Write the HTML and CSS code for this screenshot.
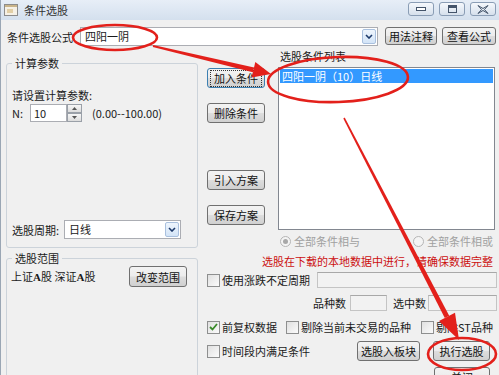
FILE: index.html
```html
<!DOCTYPE html>
<html>
<head>
<meta charset="utf-8">
<link rel="stylesheet" href="styles.css">
</head>
<body>
<div class="win">
  <div class="titlebar">
    <svg class="appicon" width="14" height="12" viewBox="0 0 14 12">
      <rect x="0.5" y="0.5" width="13" height="11" fill="#f6f1e6" stroke="#8c8c8c"/>
      <rect x="1" y="1" width="12" height="2" fill="#c9b48a"/>
      <rect x="3" y="5" width="6" height="4" fill="#e2cfa6"/>
    </svg>
    <span class="title">条件选股</span>
    <div class="controls">
      <div class="ctl"><svg width="10" height="5" viewBox="0 0 10 5"><rect x="0.5" y="0.5" width="9" height="3" fill="#fff" stroke="#44546a"/></svg></div>
      <div class="ctl"><svg width="9" height="8" viewBox="0 0 9 8"><rect x="0.5" y="0.5" width="8" height="7" fill="none" stroke="#44546a"/><rect x="1" y="1" width="7" height="2" fill="#44546a"/></svg></div>
      <div class="ctl"><svg width="12" height="9" viewBox="0 0 12 9"><path d="M1 0.5 L6 3.5 L11 0.5 M1 8.5 L6 5.5 L11 8.5 M1 0.5 L4.5 4.5 L1 8.5 M11 0.5 L7.5 4.5 L11 8.5" fill="none" stroke="#44546a" stroke-width="1"/></svg></div>
    </div>
  </div>

  <div class="client">
    <div class="formula-row">
      <span class="lbl">条件选股公式</span>
      <div class="combo formula-combo">
        <span class="combo-text">四阳一阴</span>
        <span class="drop"><svg width="8" height="5" viewBox="0 0 8 5"><path d="M1 1 L4 4 L7 1" fill="none" stroke="#1d3a6b" stroke-width="1.6"/></svg></span>
      </div>
      <button class="btn btn-top1">用法注释</button>
      <button class="btn btn-top2">查看公式</button>
    </div>

    <div class="main">
      <div class="leftcol">
        <fieldset class="group g1">
          <legend>计算参数</legend>
          <div class="g1-body">
            <div class="prompt">请设置计算参数:</div>
            <div class="nrow">
              <span>N:</span>
              <div class="spin"><span>10</span></div>
              <div class="spin-btns">
                <span class="sb"><svg width="5" height="3" viewBox="0 0 5 3"><path d="M0 3 L2.5 0 L5 3Z" fill="#555"/></svg></span>
                <span class="sb"><svg width="5" height="3" viewBox="0 0 5 3"><path d="M0 0 L2.5 3 L5 0Z" fill="#555"/></svg></span>
              </div>
              <span class="range">(0.00--100.00)</span>
            </div>
            <div class="period-row">
              <span>选股周期:</span>
              <div class="combo period-combo">
                <span class="combo-text">日线</span>
                <span class="drop"><svg width="8" height="5" viewBox="0 0 8 5"><path d="M1 1 L4 4 L7 1" fill="none" stroke="#1d3a6b" stroke-width="1.6"/></svg></span>
              </div>
            </div>
          </div>
        </fieldset>
        <fieldset class="group g2">
          <legend>选股范围</legend>
          <div class="g2-body">
            <div class="scope-row">
              <span class="scope">上证<b class="ser">A</b>股 深证<b class="ser">A</b>股</span>
              <button class="btn btn-scope">改变范围</button>
            </div>
          </div>
        </fieldset>
      </div>

      <div class="rightarea">
        <div class="rtop">
          <div class="btncol">
            <button class="btn btn-side default"><span class="focus">加入条件</span></button>
            <button class="btn btn-side b-del">删除条件</button>
            <button class="btn btn-side b-imp">引入方案</button>
            <button class="btn btn-side b-save">保存方案</button>
          </div>
          <div class="listcol">
            <div class="list-lbl">选股条件列表</div>
            <div class="listbox">
              <div class="item sel">四阳一阴（10）日线</div>
            </div>
          </div>
        </div>

        <div class="radios">
          <span class="radio on"></span><span class="rlbl">全部条件相与</span>
          <span class="radio r2"></span><span class="rlbl">全部条件相或</span>
        </div>

        <div class="warn">选股在下载的本地数据中进行，请确保数据完整</div>

        <div class="line r-use">
          <span class="cb"></span><span class="cbl">使用涨跌不定周期</span>
          <span class="field field-use"></span>
        </div>

        <div class="line r-count">
          <span>品种数</span>
          <span class="field field-n"></span>
          <span class="lbl-sel">选中数</span>
          <span class="field field-sel"></span>
        </div>

        <div class="line r-opts">
          <span class="cb checked"><svg width="9" height="8" viewBox="0 0 9 8"><path d="M1 4 L3.5 6.5 L8 1" fill="none" stroke="#3a8a2a" stroke-width="1.8"/></svg></span><span class="cbl">前复权数据</span>
          <span class="cb cb2"></span><span class="cbl">剔除当前未交易的品种</span>
          <span class="cb cb3"></span><span class="cbl">剔除ST品种</span>
        </div>

        <div class="line r-actions">
          <span class="cb"></span><span class="cbl">时间段内满足条件</span>
          <button class="btn btn-board">选股入板块</button>
          <button class="btn btn-run">执行选股</button>
        </div>

        <div class="line r-close">
          <button class="btn btn-close">关闭</button>
        </div>
      </div>
    </div>
  </div>

  <svg class="marks" width="499" height="375" viewBox="0 0 499 375">
    <g fill="none" stroke="#e3201b" stroke-width="2.6">
      <ellipse cx="114" cy="37.5" rx="42" ry="12.5"/>
      <ellipse cx="337" cy="79.5" rx="70" ry="22.5" transform="rotate(-2 337 79.5)"/>
      <ellipse cx="461" cy="354" rx="34" ry="16"/>
    </g>
    <g fill="#e3201b">
      <polygon points="151.8,47 152.2,45 253.1,67.4 251.9,72.2"/>
      <polygon points="250.7,77.6 254.3,62 270,74"/>
      <polygon points="342.3,118.4 343.7,117.6 448.2,315.8 443.8,318.1"/>
      <polygon points="438,321 454,312.8 458,340"/>
    </g>
  </svg>
</div>
</body>
</html>
```

FILE: styles.css
```css
* { box-sizing: border-box; }
html, body { margin: 0; padding: 0; }
body {
  width: 499px; height: 375px; overflow: hidden;
  background: #f0f0f0;
  font-family: "Noto Sans CJK SC", "Noto Sans", sans-serif;
  font-size: 11px; line-height: 16px; color: #1a1a1a;
}
.win {
  position: relative; width: 499px; height: 375px; overflow: hidden;
  background: #f0f0f0; border-left: 1px solid #9aa6b4;
}
.titlebar {
  height: 20px; display: flex; align-items: center;
  background: linear-gradient(#e7eef7, #d4e0ee);
  padding-left: 3px;
}
.appicon { margin-right: 6px; }
.title { color: #333; font-size: 11px; }
.controls { margin-left: auto; margin-right: 3px; display: flex; gap: 5px; align-self: flex-start; margin-top: 2px; }
.ctl {
  width: 26px; height: 14px; border: 1px solid #8a9db5; border-radius: 3px;
  background: linear-gradient(#f5f8fc, #d6e0ec);
  display: flex; align-items: center; justify-content: center;
}

.client { padding: 0 2px 0 5px; }

.formula-row { display: flex; align-items: flex-start; margin-top: 7px; height: 20px; padding-left: 1px; }
.lbl { line-height: 20px; }
.combo {
  display: flex; align-items: center; background: #fff;
  border: 1px solid #abadb3; height: 19px; padding: 1px;
}
.combo-text { flex: 1; padding-left: 3px; line-height: 15px; }
.drop {
  width: 14px; height: 15px; border: 1px solid #a9c0de; border-radius: 2px;
  background: linear-gradient(#eef5fd, #d3e4f7);
  display: flex; align-items: center; justify-content: center;
}
.formula-combo { margin-left: 7px; width: 298px; }
.btn {
  font-family: inherit; font-size: 11px; color: #111; padding: 0;
  border: 1px solid #707070; border-radius: 3px;
  background: linear-gradient(#f3f3f3 0%, #ececec 48%, #dddddd 52%, #d0d0d0 100%);
  height: 20px; line-height: 16px;
}
.btn-top1 { margin-left: 7px; width: 52px; height: 18px; }
.btn-top2 { margin-left: 5px; width: 54px; height: 18px; }

.main { display: flex; align-items: flex-start; }
.leftcol { width: 192px; display: flex; flex-direction: column; }
.group {
  margin: 0; padding: 0 5px; border: 1px solid #ccd3da; border-radius: 3px; min-width: 0;
}
.group legend { padding: 0 3px; line-height: 16px; }
.g1 { margin-top: 8px; }
.g1-body { height: 176px; display: flex; flex-direction: column; padding-bottom: 8px; }
.prompt { margin-top: 16px; }
.nrow { display: flex; align-items: center; height: 18px; margin-top: 1px; }
.spin {
  margin-left: 7px; width: 37px; height: 18px; background: #fff;
  border: 1px solid #abadb3; padding-left: 3px; line-height: 16px;
}
.spin-btns { width: 15px; height: 18px; display: flex; flex-direction: column; }
.sb {
  flex: 1; border: 1px solid #9aa0a8; background: linear-gradient(#f6f6f6, #dcdcdc);
  display: flex; align-items: center; justify-content: center;
}
.range { margin-left: 10px; }
.period-row { margin-top: auto; display: flex; align-items: center; height: 19px; }
.period-combo { margin-left: 5px; width: 117px; }

.g2 { margin-top: 2px; }
.g2-body { height: 130px; }
.scope-row { display: flex; align-items: center; height: 21px; }
.scope { margin-left: -1px; }
.ser { font-family: "Liberation Serif", serif; font-size: 11px; }
.btn-scope { margin-left: auto; margin-right: 5px; width: 58px; height: 21px; }

.rightarea { flex: 1; margin-left: 8px; display: flex; flex-direction: column; }
.rtop { display: flex; }
.btncol { margin-left: 1px; width: 58px; display: flex; flex-direction: column; padding-top: 21px; }
.btn-side { width: 58px; height: 20px; }
.default { border-color: #3c7fb1; }
.focus { display: inline-block; outline: 1px dotted #333; outline-offset: 1px; padding: 0 2px; line-height: 13px; }
.b-del { margin-top: 15px; }
.b-imp { margin-top: 47px; }
.b-save { margin-top: 15px; }
.listcol { flex: 1; margin-left: 13px; margin-right: 2px; }
.list-lbl { margin-top: 1px; margin-left: 2px; }
.listbox { margin-top: 3px; height: 163px; background: #fff; border: 1px solid #828790; padding: 1px; }
.item { height: 14px; line-height: 14px; padding-left: 2px; }
.sel { background: #3399ff; color: #fff; }

.radios { display: flex; align-items: center; height: 16px; margin-top: 3px; padding-left: 74px; color: #a0a0a0; }
.radio { width: 11px; height: 11px; border-radius: 50%; border: 1px solid #b5b5b5; background: #f4f4f4; position: relative; }
.radio.on::after { content: ""; position: absolute; left: 2px; top: 2px; width: 5px; height: 5px; border-radius: 50%; background: #a8a8a8; }
.rlbl { margin-left: 3px; }
.r2 { margin-left: 53px; }

.warn { margin-top: 4px; text-align: right; padding-right: 4px; color: #cc1010; height: 16px; }

.line { display: flex; align-items: center; height: 16px; }
.cb {
  width: 13px; height: 13px; border: 1px solid #8e8f8f; background: linear-gradient(135deg, #e0e0e0, #fbfbfb);
  display: inline-flex; align-items: center; justify-content: center; flex: none; margin-left: 1px;
}
.cbl { margin-left: 2px; }
.field { height: 16px; border: 1px solid #c4c4c4; border-top-color: #a8a8a8; background: #f2f2f2; }
.r-use { margin-top: 3px; }
.field-use { flex: 1; margin-left: 7px; }
.r-count { margin-top: 7px; padding-left: 107px; }
.field-n { width: 37px; margin-left: 4px; }
.lbl-sel { margin-left: 6px; }
.field-sel { flex: 1; margin-left: 2px; }
.r-opts { margin-top: 8px; }
.cb2 { margin-left: 9px; }
.cb3 { margin-left: 10px; }
.r-actions { margin-top: 6px; height: 20px; }
.btn-board { margin-left: 47px; width: 63px; }
.btn-run { margin-left: 13px; width: 57px; }
.r-close { margin-top: 6px; height: 20px; }
.btn-close { margin-left: 228px; width: 56px; }

.marks { position: absolute; left: 0; top: 0; pointer-events: none; }
```
